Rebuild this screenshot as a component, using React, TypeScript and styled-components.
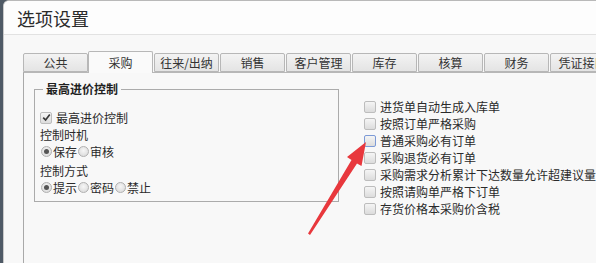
import React from 'react';
import styled, { createGlobalStyle } from 'styled-components';

const GlobalStyle = createGlobalStyle`
  html, body {
    margin: 0;
    padding: 0;
    background: #4f5a66;
  }
  body {
    font-family: "Noto Sans CJK SC", "Noto Sans", sans-serif;
    font-size: 12px;
    color: #2a2a2a;
  }
`;

const Window = styled.div`
  position: relative;
  margin-left: 3px;
  height: 263px;
  overflow: hidden;
  background: #f8f8f8;
  border-top: 1px solid #b9b9b9;
  border-left: 1px solid #c9c9c9;
  border-top-left-radius: 6px;
  box-sizing: border-box;
`;

const TitleBar = styled.div`
  height: 33px;
  display: flex;
  align-items: center;
  padding-left: 13px;
  background: #fdfdfd;
  border-bottom: 1px solid #e2e2e2;
  font-size: 18px;
  color: #2b2b2b;
`;

const Body = styled.div`
  padding: 16px 0 0 19px;
`;

const TabStrip = styled.div`
  display: flex;
  align-items: flex-end;
  height: 21px;
  white-space: nowrap;
`;

const Tab = styled.div<{ $active?: boolean }>`
  position: relative;
  flex: none;
  width: 65px;
  height: ${p => (p.$active ? 22 : 19)}px;
  margin-left: ${p => (p.$active ? 0 : 1)}px;
  margin-bottom: ${p => (p.$active ? -1 : 0)}px;
  display: flex;
  align-items: center;
  justify-content: center;
  box-sizing: border-box;
  border: 1px solid #b7b7b7;
  border-bottom: ${p => (p.$active ? 'none' : '1px solid #b7b7b7')};
  border-radius: 2px 2px 0 0;
  background: ${p => (p.$active ? '#fafafa' : 'linear-gradient(#f3f3f3, #e4e4e4)')};
  z-index: ${p => (p.$active ? 1 : 0)};
  color: #333;
  font-size: 12px;
  &:first-child {
    margin-left: 0;
  }
`;

const Panel = styled.div`
  display: flex;
  align-items: flex-start;
  height: 200px;
  padding: 9px 0 0 10px;
  border-top: 1px solid #b7b7b7;
  border-left: 1px solid #a9a9a9;
  background: #f8f8f8;
`;

const GroupBox = styled.fieldset`
  flex: none;
  width: 305px;
  margin: 0;
  padding: 0 0 5px 5px;
  box-sizing: border-box;
  border: 1px solid #ababab;
  min-inline-size: 0;
`;

const Legend = styled.legend`
  padding: 0 3px;
  margin-left: 3px;
  line-height: 14px;
  font-weight: bold;
  font-size: 12px;
  color: #1f1f1f;
`;

const GroupRows = styled.div`
  margin-top: 13px;
  display: flex;
  flex-direction: column;
`;

const Row = styled.div<{ $gap?: number }>`
  display: flex;
  align-items: center;
  height: 17px;
  margin-top: ${p => p.$gap ?? 0}px;
  white-space: nowrap;
`;

const Label = styled.span`
  line-height: 17px;
`;

const Box = styled.span<{ $hover?: boolean }>`
  flex: none;
  width: 12px;
  height: 12px;
  margin-right: 4px;
  box-sizing: border-box;
  border: 1px solid ${p => (p.$hover ? '#7d9ad6' : '#bdbdbd')};
  border-radius: 2px;
  background: linear-gradient(#f5f5f5, #dcdcdc);
  display: flex;
  align-items: center;
  justify-content: center;
`;

const Radio = styled.span<{ $on?: boolean }>`
  flex: none;
  width: 11px;
  height: 11px;
  margin: 0 1px 0 1px;
  box-sizing: border-box;
  border: 1px solid #b0b0b0;
  border-radius: 50%;
  background: radial-gradient(circle at 50% 40%, #f6f6f6, #d6d6d6);
  display: flex;
  align-items: center;
  justify-content: center;
  &::after {
    content: '';
    display: ${p => (p.$on ? 'block' : 'none')};
    width: 5px;
    height: 5px;
    border-radius: 50%;
    background: #555;
  }
`;

const OptionList = styled.div`
  margin: 16px 0 0 25px;
  display: flex;
  flex-direction: column;
`;

const Arrow = styled.svg`
  position: absolute;
  left: -3px;
  top: 0;
  pointer-events: none;
`;

const Check = () => (
  <svg width="9" height="9" viewBox="0 0 9 9">
    <path d="M1.2 4.6 L3.6 7 L7.8 1.6" fill="none" stroke="#3a3a3a" strokeWidth="1.7" />
  </svg>
);

const tabs = ['公共', '采购', '往来/出纳', '销售', '客户管理', '库存', '核算', '财务', '凭证接口'];

const options = [
  '进货单自动生成入库单',
  '按照订单严格采购',
  '普通采购必有订单',
  '采购退货必有订单',
  '采购需求分析累计下达数量允许超建议量',
  '按照请购单严格下订单',
  '存货价格本采购价含税',
];

const App: React.FC = () => {
  return (
    <>
      <GlobalStyle />
      <Window>
        <TitleBar>选项设置</TitleBar>
        <Body>
          <TabStrip>
            {tabs.map(t => (
              <Tab key={t} $active={t === '采购'}>{t}</Tab>
            ))}
          </TabStrip>
          <Panel>
            <GroupBox>
              <Legend>最高进价控制</Legend>
              <GroupRows>
                <Row>
                  <Box><Check /></Box>
                  <Label>最高进价控制</Label>
                </Row>
                <Row><Label>控制时机</Label></Row>
                <Row>
                  <Radio $on /><Label>保存</Label>
                  <Radio /><Label>审核</Label>
                </Row>
                <Row $gap={2}><Label>控制方式</Label></Row>
                <Row>
                  <Radio $on /><Label>提示</Label>
                  <Radio /><Label>密码</Label>
                  <Radio /><Label>禁止</Label>
                </Row>
              </GroupRows>
            </GroupBox>
            <OptionList>
              {options.map((o, i) => (
                <Row key={o}>
                  <Box $hover={i === 2} />
                  <Label>{o}</Label>
                </Row>
              ))}
            </OptionList>
          </Panel>
        </Body>
        <Arrow width="596" height="263" viewBox="0 0 596 263">
          <polygon
            points="365,141 360.5,165 356,162.5 309,234 307,232.5 350.5,159 346,156"
            fill="#e8383d"
          />
        </Arrow>
      </Window>
    </>
  );
};

export default App;
